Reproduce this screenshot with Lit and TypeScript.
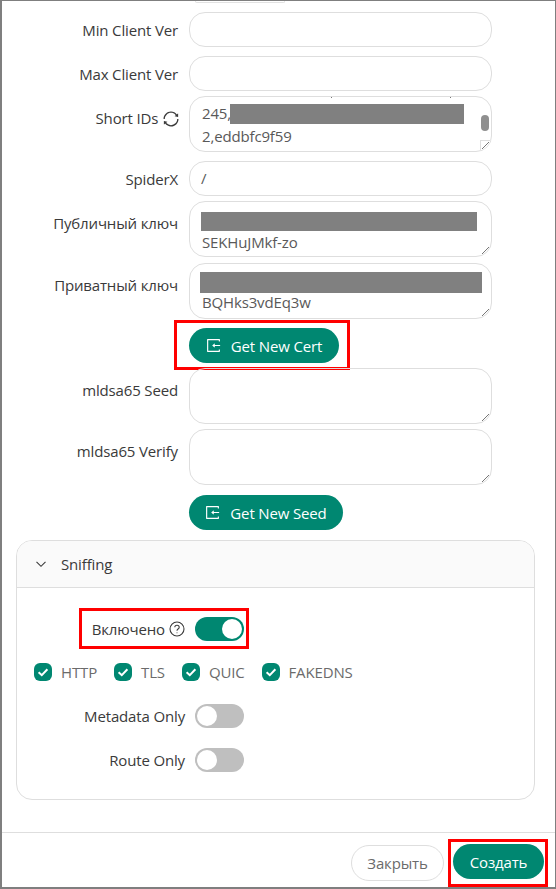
import { LitElement, html, css, svg } from "lit";
import { customElement } from "lit/decorators.js";

const importIcon = html`<svg class="ico" viewBox="64 64 896 896" fill="currentColor"><path d="M888.3 757.4h-53.8c-4.2 0-7.7 3.5-7.7 7.7v61.8H197.1V197.1h629.8v61.8c0 4.2 3.5 7.7 7.7 7.7h53.8c4.2 0 7.7-3.4 7.7-7.7V158.7c0-17-13.7-30.7-30.7-30.7H158.7c-17 0-30.7 13.7-30.7 30.7v706.6c0 17 13.7 30.7 30.7 30.7h706.6c17 0 30.7-13.7 30.7-30.7V765.1c0-4.3-3.5-7.7-7.7-7.7zM902 476H588v-76.7c0-6.7-7.8-10.5-13-6.3l-141.9 112a8 8 0 000 12.6l141.9 112c5.3 4.2 13 .4 13-6.3V540h314c4.4 0 8-3.6 8-8v-48c0-4.4-3.6-8-8-8z"/></svg>`;
const syncIcon = html`<svg class="sync" viewBox="64 64 896 896" fill="currentColor"><path d="M168 504.2c1-43.7 10-86.1 26.9-126 17.3-41 42.1-77.7 73.7-109.4S337 212.3 378 195c42.4-17.9 87.4-27 133.9-27s91.5 9.1 133.8 27A341.5 341.5 0 01755 268.8c9.9 9.9 19.2 20.4 27.8 31.4l-60.2 47a8 8 0 003 14.1l175.7 43c5 1.2 9.9-2.6 9.9-7.7l.8-180.9c0-6.7-7.7-10.5-12.9-6.3l-56.4 44.1C765.8 155.1 646.2 92 511.8 92 282.7 92 96.3 275.6 92 503.8a8 8 0 008 8.2h60c4.4 0 7.9-3.5 8-7.8zm756 7.8h-60c-4.4 0-7.9 3.5-8 7.8-1 43.7-10 86.1-26.9 126-17.3 41-42.1 77.8-73.7 109.4A342.45 342.45 0 01512.1 856a342.24 342.24 0 01-243.2-100.8c-9.9-9.9-19.2-20.4-27.8-31.4l60.2-47a8 8 0 00-3-14.1l-175.7-43c-5-1.2-9.9 2.6-9.9 7.7l-.7 181c0 6.7 7.7 10.5 12.9 6.3l56.4-44.1C258.2 868.9 377.8 932 512.2 932c229.2 0 415.5-183.7 419.8-411.8a8 8 0 00-8-8.2z"/></svg>`;
const chevron = html`<svg class="chev" viewBox="0 0 12 12" fill="none" stroke="currentColor" stroke-width="1.1"><path d="M1.5 3.8 6 8.3l4.5-4.5"/></svg>`;
const question = html`<svg class="q" viewBox="0 0 16 16" fill="none" stroke="currentColor" stroke-width="1.1"><circle cx="8" cy="8" r="7"/><path d="M5.8 6.3c0-1.2 1-2 2.2-2s2.2.8 2.2 2c0 1.8-2.2 1.7-2.2 3.4"/><circle cx="8" cy="11.7" r=".5" fill="currentColor" stroke="none"/></svg>`;
const grip = svg`<path d="M1 8 8 1M5 8 8 5" stroke="#777" stroke-width="1" fill="none"/>`;

@customElement("app-root")
export class AppRoot extends LitElement {
  static styles = css`
    :host { display: block; width: 556px; height: 889px; box-sizing: border-box; overflow: hidden; background: #fff;
      border: 1px solid #7f7f7f; border-width: 1px 1px 2px 2px; color: #3a3a3a;
      font: 15px/22px "Open Sans", "Noto Sans", sans-serif; letter-spacing: -0.15px; }
    .sliver { height: 1px; margin-left: 193px; width: 88px; border: 1px solid #e2e2e2; border-top: 0; border-radius: 0 0 12px 12px; margin-bottom: 9px; }
    .row { display: grid; grid-template-columns: 176px 303px; column-gap: 11px; }
    .label { text-align: right; padding-top: 7px; white-space: nowrap; }
    .label.ta { padding-top: 11px; }
    .label .sync { width: 16px; height: 16px; vertical-align: -3px; margin-left: 1px; margin-right: -1px; }
    .m5 { margin-bottom: 5px; } .m6 { margin-bottom: 6px; } .m9 { margin-bottom: 9px; } .m10 { margin-bottom: 10px; }
    .input { height: 35px; box-sizing: border-box; border: 1px solid #dedede; border-radius: 16px; padding: 5px 11px; color: #595959; }
    .area { position: relative; height: 56px; box-sizing: border-box; border: 1px solid #dedede; border-radius: 16px; padding: 5px 12px; color: #595959; overflow: hidden; }
    .line { height: 23px; white-space: nowrap; }
    .line.skip { height: 24px; }
    .p5 { padding-top: 5px; } .p3 { padding-top: 3px; }
    .mask { position: absolute; background: #808080; }
    .m-short { left: 40px; top: 7px; width: 234px; height: 20px; }
    .m-pub { left: 11px; top: 10px; width: 276px; height: 19px; }
    .m-priv { left: 10px; top: 8px; width: 282px; height: 21px; }
    .thumb { position: absolute; right: 2px; top: 18px; width: 8px; height: 16px; border-radius: 4px; background: #8f8f8f; }
    .corner { position: absolute; right: 0; bottom: 0; width: 11px; height: 11px; box-sizing: border-box; border: 1px solid #dedede; border-width: 1px 0 0 1px; background: #fff; }
    .grip { position: absolute; right: 1px; bottom: 1px; width: 9px; height: 9px; }
    .dot { position: absolute; top: 0; width: 1px; height: 1px; background: #777; }
    .cell { display: flex; align-items: flex-start; }
    .btn { display: inline-flex; align-items: center; justify-content: center; height: 35px; box-sizing: border-box; border-radius: 18px; background: #008771; color: #fff; border: 0; font: inherit; letter-spacing: inherit; }
    .btn.icon { padding: 0; gap: 10px; }
    .ico { width: 15px; height: 15px; }
    .w150 { width: 150px; } .w154 { width: 154px; }
    .cert-wrap { position: relative; }
    .box { position: absolute; border: 3px solid #f00; box-sizing: border-box; pointer-events: none; }
    .box-cert { left: -15px; top: -8px; width: 176px; height: 50px; }
    .panel { margin: 0 20px 0 14px; height: 260px; box-sizing: border-box; border: 1px solid #dedede; border-radius: 16px; overflow: hidden; }
    .head { height: 47px; box-sizing: border-box; background: #fafafa; border-bottom: 1px solid #dedede; display: flex; align-items: center; padding: 0 18px; gap: 14px; }
    .chev { width: 12px; height: 12px; }
    .body { padding: 20px 0 0; }
    .sw-row { display: grid; grid-template-columns: 168px 49px; column-gap: 10px; height: 24px; align-items: center; margin-bottom: 20px; }
    .sw-row .l { text-align: right; white-space: nowrap; }
    .sw { position: relative; width: 49px; height: 24px; border-radius: 12px; background: #bfbfbf; }
    .sw::after { content: ""; position: absolute; top: 2px; left: 2px; width: 20px; height: 20px; border-radius: 50%; background: #fff; }
    .sw.on { background: #008771; }
    .sw.on::after { left: 27px; }
    .en-row { position: relative; margin-top: 9px; margin-bottom: 20px; }
    .en-l { display: inline-flex; align-items: center; justify-content: flex-end; gap: 4px; width: 168px; padding-bottom: 1px; box-sizing: border-box; }
    .q { width: 16px; height: 16px; }
    .box-en { left: 62px; top: -9px; width: 170px; height: 41px; }
    .checks { display: flex; height: 22px; align-items: center; padding-left: 17px; margin-bottom: 21px; }
    .ck { display: flex; align-items: center; gap: 9px; color: #6b6b6b; margin-right: 17px; }
    .ck svg { width: 18px; height: 18px; }
    .footer { position: relative; margin: 32px -1px 0 -2px; height: 57px; border-top: 1px solid #dedede; display: flex; justify-content: flex-end; align-items: flex-start; padding: 11px 12px 0 0; gap: 9px; }
    .ghost { width: 93px; height: 36px; margin-top: 1px; box-sizing: border-box; border: 1px solid #dedede; border-radius: 18px; background: #fff; color: #6b6b6b; font: inherit; letter-spacing: inherit; }
    .create { position: relative; width: 91px; }
    .box-create { left: -5px; top: -5px; width: 100px; height: 48px; }
  `;

  private check() {
    return html`<svg viewBox="0 0 18 18"><rect width="18" height="18" rx="6" fill="#008771"/><path d="M4.6 9.2 7.8 12.2 13.4 6.3" fill="none" stroke="#fff" stroke-width="2"/></svg>`;
  }

  render() {
    return html`
      <div class="sliver"></div>
      <div class="row m9"><div class="label">Min Client Ver</div><div class="input"></div></div>
      <div class="row m5"><div class="label">Max Client Ver</div><div class="input"></div></div>
      <div class="row m9"><div class="label ta">Short IDs ${syncIcon}</div>
        <div class="area">
          <div class="line">245,</div><div class="line">2,eddbfc9f59</div>
          <span class="dot" style="left:141px"></span><span class="dot" style="left:260px"></span>
          <div class="mask m-short"></div><div class="thumb"></div>
          <div class="corner"><svg class="grip" viewBox="0 0 9 9">${grip}</svg></div>
        </div></div>
      <div class="row m5"><div class="label">SpiderX</div><div class="input">/</div></div>
      <div class="row m6"><div class="label ta">Публичный ключ</div>
        <div class="area p5"><div class="line skip"></div><div class="line">SEKHuJMkf-zo</div>
          <div class="mask m-pub"></div><svg class="grip" viewBox="0 0 9 9">${grip}</svg></div></div>
      <div class="row m9"><div class="label ta">Приватный ключ</div>
        <div class="area p3"><div class="line skip"></div><div class="line">BQHks3vdEq3w</div>
          <div class="mask m-priv"></div><svg class="grip" viewBox="0 0 9 9">${grip}</svg></div></div>
      <div class="row m5"><div></div><div class="cell cert-wrap"><button class="btn icon w150">${importIcon}Get New Cert</button><div class="box box-cert"></div></div></div>
      <div class="row m5"><div class="label ta">mldsa65 Seed</div><div class="area"><svg class="grip" viewBox="0 0 9 9">${grip}</svg></div></div>
      <div class="row m10"><div class="label ta">mldsa65 Verify</div><div class="area"><svg class="grip" viewBox="0 0 9 9">${grip}</svg></div></div>
      <div class="row m10"><div></div><div class="cell"><button class="btn icon w154">${importIcon}Get New Seed</button></div></div>
      <div class="panel">
        <div class="head">${chevron}<span>Sniffing</span></div>
        <div class="body">
          <div class="sw-row en-row"><div class="en-l">Включено ${question}</div><div class="sw on"></div><div class="box box-en"></div></div>
          <div class="checks">
            <div class="ck">${this.check()}HTTP</div>
            <div class="ck">${this.check()}TLS</div>
            <div class="ck">${this.check()}QUIC</div>
            <div class="ck">${this.check()}FAKEDNS</div>
          </div>
          <div class="sw-row"><div class="l">Metadata Only</div><div class="sw"></div></div>
          <div class="sw-row"><div class="l">Route Only</div><div class="sw"></div></div>
        </div>
      </div>
      <div class="footer">
        <button class="ghost">Закрыть</button>
        <button class="btn create">Создать<div class="box box-create"></div></button>
      </div>
    `;
  }
}
